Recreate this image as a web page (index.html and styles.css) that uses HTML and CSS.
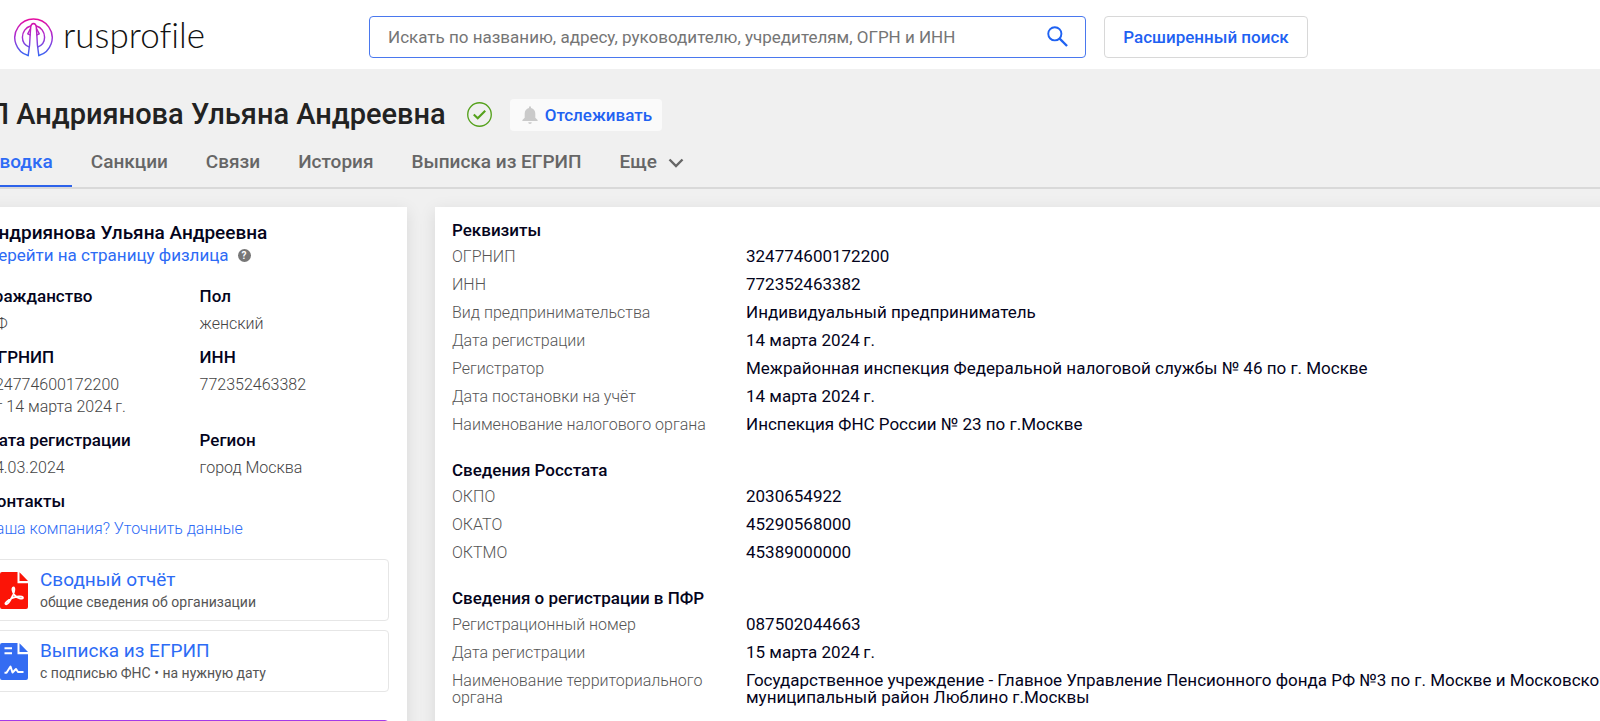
FILE: index.html
```html
<!DOCTYPE html>
<html lang="ru">
<head>
<meta charset="utf-8">
<title>ИП Андриянова Ульяна Андреевна</title>
<link rel="stylesheet" href="styles.css">
</head>
<body>
<header class="header">
  <a class="logo" href="#">
    <svg class="logo-mark" viewBox="0 0 38 38" fill="none" stroke="url(#lg)" stroke-width="1.400" stroke-linejoin="round" stroke-linecap="round">
      <defs><linearGradient id="lg" x1="0" y1="0" x2="0" y2="38" gradientUnits="userSpaceOnUse"><stop offset="0" stop-color="#e80a9e"/><stop offset=".5" stop-color="#a32fd4"/><stop offset="1" stop-color="#2f6cf6"/></linearGradient></defs>
      <path d="M13.800 36.600A18.200 18.200 0 1 1 24.200 36.600"/>
      <path d="M13.800 36.600C15 30 15.600 24 15.800 15.500L16.300 8.500Q16.800 5.600 19 5.400Q21.200 5.600 21.700 8.500L22.200 15.500C22.400 24 23 30 24.200 36.600"/>
      <path d="M14.600 28.200C10.500 26.500 8.200 22.500 8.200 18.800C8.200 13.500 11.500 9 16.200 7.800M21.800 7.800C26.500 9 29.800 13.500 29.800 18.800C29.800 22.500 27.500 26.500 23.400 28.200"/>
      <path d="M16 10.500L13.400 15.500L15.700 16.500M22 10.500L24.600 15.500L22.300 16.500"/>
    </svg>
    <span class="logo-name">rusprofile</span>
  </a>
  <form class="search">
    <input class="search-input" type="text" aria-label="Поиск" placeholder="Искать по названию, адресу, руководителю, учредителям, ОГРН и ИНН">
    <button class="search-button" type="button" aria-label="Найти">
      <svg class="search-icon" viewBox="0 0 22 22" fill="none" stroke="#1f62f2" stroke-width="2"><circle cx="8.200" cy="8.200" r="6.900"/><path d="M13 13l8 8" stroke-width="2.400"/></svg>
    </button>
  </form>
  <button class="advanced" type="button">Расширенный поиск</button>
</header>
<main class="page">
  <div class="title-row">
    <h1 class="title">ИП Андриянова Ульяна Андреевна</h1>
    <svg class="status" viewBox="0 0 24 24" fill="none" stroke="#55a11c"><circle cx="12" cy="12" r="11.300" stroke-width="1.300"/><path d="M6.500 12l3.800 3.600 7.200-7.200" stroke-width="2"/></svg>
    <button class="follow" type="button">
      <svg class="bell" viewBox="0 0 16 18" fill="#cacaca"><path d="M7 1.200a1 1 0 0 1 2 0v.7c2.700.6 4.300 2.600 4.300 5.600v4.300L15.600 14v1H.4v-1l2.300-2.200V7.500c0-3 1.600-5 4.300-5.600zM6.200 16.200h3.600a1.800 1.800 0 0 1-3.600 0z"/></svg>
      Отслеживать
    </button>
  </div>
  <nav class="tabs">
    <a class="tab active" href="#">Сводка</a>
    <a class="tab" href="#">Санкции</a>
    <a class="tab" href="#">Связи</a>
    <a class="tab" href="#">История</a>
    <a class="tab" href="#">Выписка из ЕГРИП</a>
    <a class="tab" href="#">Еще <svg class="chevron" viewBox="0 0 16 10" fill="none" stroke="#666" stroke-width="2.400"><path d="M1.500 1.500L8 8l6.500-6.500"/></svg></a>
  </nav>
  <div class="columns">
    <aside class="card person">
      <h2 class="person-name">Андриянова Ульяна Андреевна</h2>
      <div class="person-link"><a class="link" href="#">Перейти на страницу физлица</a>
        <span class="help">?</span>
      </div>
      <div class="facts">
        <dl class="fact"><dt>Гражданство</dt><dd>РФ</dd></dl>
        <dl class="fact"><dt>Пол</dt><dd>женский</dd></dl>
        <dl class="fact"><dt>ОГРНИП</dt><dd>324774600172200<br>от 14 марта 2024&thinsp;г.</dd></dl>
        <dl class="fact"><dt>ИНН</dt><dd>772352463382</dd></dl>
        <dl class="fact"><dt>Дата регистрации</dt><dd>14.03.2024</dd></dl>
        <dl class="fact"><dt>Регион</dt><dd>город Москва</dd></dl>
        <dl class="fact wide"><dt>Контакты</dt><dd><a class="link" href="#">Ваша компания? Уточнить данные</a></dd></dl>
      </div>
      <a class="doc" href="#">
        <svg class="doc-icon" viewBox="0 0 28 37"><path fill="#fb1407" d="M2 0h15.500v11.200H28V35a2 2 0 0 1-2 2H2a2 2 0 0 1-2-2V2a2 2 0 0 1 2-2zM19.500.3L28 9h-8.500z"/><path fill="none" stroke="#fff" stroke-width="1.800" stroke-linejoin="round" d="M13.500 15.500c-2.200 0-.6 5.300 1.200 7.700 2.200 3 8.300 4.600 8.300 2.600 0-2.200-7.200-1.400-11.200.4-3.600 1.600-7.600 5.400-6 6 2 .6 6-6.200 7.400-9.700 1.100-3 1.800-7 .3-7z"/></svg>
        <span class="doc-text"><span class="doc-title">Сводный отчёт</span><span class="doc-note">общие сведения об организации</span></span>
      </a>
      <a class="doc" href="#">
        <svg class="doc-icon" viewBox="0 0 28 37"><path fill="#346cf2" d="M2 0h15.500v11.200H28V35a2 2 0 0 1-2 2H2a2 2 0 0 1-2-2V2a2 2 0 0 1 2-2zM19.500.3L28 9h-8.500z"/><path fill="none" stroke="#fff" stroke-width="2" stroke-linejoin="round" d="M4.500 5.200H12M4.500 10.200H12M4.500 29.800h2l4-6.300 2 6 3.500-3.500 2 3h5.500"/></svg>
        <span class="doc-text"><span class="doc-title">Выписка из ЕГРИП</span><span class="doc-note">с подписью ФНС • на нужную дату</span></span>
      </a>
      <div class="promo"></div>
    </aside>
    <section class="card details">
      <h3 class="group-title">Реквизиты</h3>
      <dl class="props">
        <dt>ОГРНИП</dt><dd>324774600172200</dd>
        <dt>ИНН</dt><dd>772352463382</dd>
        <dt>Вид предпринимательства</dt><dd>Индивидуальный предприниматель</dd>
        <dt>Дата регистрации</dt><dd>14 марта 2024&thinsp;г.</dd>
        <dt>Регистратор</dt><dd>Межрайонная инспекция Федеральной налоговой службы № 46 по г. Москве</dd>
        <dt>Дата постановки на учёт</dt><dd>14 марта 2024&thinsp;г.</dd>
        <dt>Наименование налогового органа</dt><dd>Инспекция ФНС России № 23 по г.Москве</dd>
      </dl>
      <h3 class="group-title">Сведения Росстата</h3>
      <dl class="props">
        <dt>ОКПО</dt><dd>2030654922</dd>
        <dt>ОКАТО</dt><dd>45290568000</dd>
        <dt>ОКТМО</dt><dd>45389000000</dd>
      </dl>
      <h3 class="group-title">Сведения о регистрации в ПФР</h3>
      <dl class="props">
        <dt>Регистрационный номер</dt><dd>087502044663</dd>
        <dt>Дата регистрации</dt><dd>15 марта 2024&thinsp;г.</dd>
        <dt>Наименование территориального органа</dt><dd>Государственное учреждение - Главное Управление Пенсионного фонда РФ №3 по г. Москве и Московской области<br>муниципальный район Люблино г.Москвы</dd>
      </dl>
    </section>
  </div>
</main>
</body>
</html>
```
FILE: styles.css
```css
* { box-sizing: border-box; }
body {
  margin: 0;
  height: 100vh;
  overflow: hidden;
  background: #f0f0f0;
  color: #04041c;
  font-family: Roboto, "Liberation Sans", sans-serif;
  font-size: 17px;
  line-height: 17px;
}
a { text-decoration: none; }
button { font-family: inherit; cursor: pointer; }
h1, h2, h3, dl, dd { margin: 0; }

.header {
  display: flex;
  align-items: flex-start;
  padding: 16px 14px 11px;
  background: #fff;
}
.logo {
  display: flex;
  gap: 10px;
  width: 355px;
  padding-top: 2px;
  color: #111;
}
.logo-mark { width: 39px; height: 39px; }
.logo-name {
  font-family: Lato, sans-serif;
  font-size: 35px;
  font-weight: 300;
  font-variant-ligatures: none;
  line-height: 32px;
}
.search {
  display: flex;
  width: 717px;
  height: 42px;
  border: 1px solid #4a78ee;
  border-radius: 4px;
}
.search-input {
  flex: 1;
  padding: 0 18px;
  border: 0;
  outline: 0;
  background: transparent;
  font: inherit;
}
.search-input::placeholder { color: #757575; opacity: 1; }
.search-button {
  width: 56px;
  padding: 2px 0 0;
  border: 0;
  background: none;
}
.search-icon { width: 21px; height: 21px; }
.advanced {
  width: 204px;
  height: 42px;
  margin-left: 18px;
  padding: 0;
  border: 1px solid #d8d8d8;
  border-radius: 4px;
  background: #fff;
  color: #1f62f2;
  font-size: 17px;
  font-weight: 500;
}

.page { margin: 0 -120px 0 -32px; }
.title-row {
  display: flex;
  align-items: center;
  padding-top: 27px;
}
.title {
  color: #222;
  font-size: 29px;
  font-weight: 500;
  line-height: 36px;
}
.status { width: 25px; height: 25px; margin-left: 21px; }
.follow {
  display: flex;
  align-items: center;
  gap: 7px;
  height: 32px;
  margin: 2px 0 0 18px;
  padding: 0 10px 0 12px;
  border: 0;
  border-radius: 4px;
  background: #fafafa;
  color: #1f62f2;
  font-size: 17px;
  font-weight: 500;
}
.bell { width: 16px; height: 18px; }
.tabs {
  display: flex;
  border-bottom: 2px solid #d9d9d9;
}
.tab {
  padding: 20px 19px 13px;
  border-bottom: 2px solid transparent;
  color: #666;
  font-size: 19px;
  font-weight: 500;
  line-height: 20px;
}
.tab.active { border-color: #2d62ea; color: #2d6bf5; }
.chevron { width: 16px; height: 10px; margin-left: 6px; }

.columns {
  display: grid;
  grid-template-columns: 439px 1fr;
  gap: 28px;
  padding-top: 18px;
}
.card {
  background: #fff;
  box-shadow: 0 4px 16px rgba(0, 0, 0, 0.1);
}
.person { padding: 17px 18px 40px; }
.person-name { font-size: 19px; font-weight: 500; line-height: 18px; }
.person-link {
  display: flex;
  align-items: center;
  gap: 9px;
  margin-top: 5px;
}
.link { color: #2d6bf5; }
.help {
  width: 13px;
  height: 13px;
  border-radius: 50%;
  background: #777;
  color: #fff;
  font-size: 10px;
  font-weight: 700;
  line-height: 13px;
  text-align: center;
}
.facts {
  display: grid;
  grid-template-columns: 53% 1fr;
  row-gap: 11px;
  margin-top: 21px;
}
.fact dt { font-weight: 500; line-height: 22px; }
.fact dd {
  margin-top: 6px;
  color: #444;
  font-size: 16px;
  font-weight: 300;
  line-height: 22px;
}
.wide { grid-column: 1 / -1; }
.doc {
  display: flex;
  align-items: center;
  gap: 12px;
  height: 62px;
  margin-top: 9px;
  padding-left: 13px;
  border: 1px solid #e6e6e6;
  border-radius: 4px;
}
.facts + .doc { margin-top: 19px; }
.doc-icon { width: 28px; height: 37px; }
.doc-text { display: grid; gap: 2px; }
.doc-title { color: #2d6bf5; font-size: 19px; line-height: 22px; }
.doc-note { color: #555; font-size: 14px; line-height: 18px; }
.promo {
  height: 60px;
  margin-top: 28px;
  border: 1px solid #a33be8;
  border-radius: 4px;
}

.details { padding: 14px 17px 40px; }
.group-title { font-size: 17px; font-weight: 500; line-height: 18px; }
.props {
  display: grid;
  grid-template-columns: 270px 1fr;
  column-gap: 24px;
  row-gap: 11px;
  margin: 9px 0 28px;
}
.props dt { color: #555; font-size: 16px; font-weight: 300; }
.props dd { white-space: nowrap; }
```
